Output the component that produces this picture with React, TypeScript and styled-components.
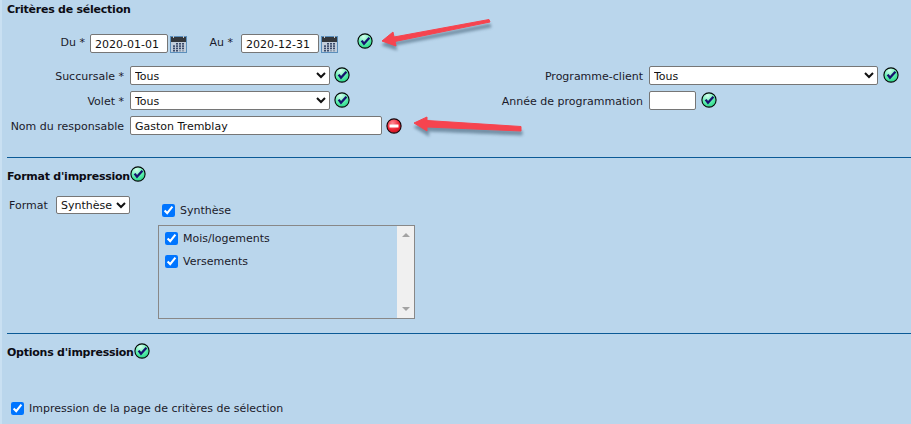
import React from "react";
import styled, { createGlobalStyle } from "styled-components";

const Global = createGlobalStyle`
  html, body { margin: 0; padding: 0; background: #bad6ec; overflow: hidden; }
  body { font-family: "DejaVu Sans", Verdana, sans-serif; font-size: 11px; color: #1a1a2a; }
`;

const Page = styled.div`
  position: relative;
  width: 911px;
  height: 424px;
  box-sizing: border-box;
  background: #bad6ec;
  border-left: 2px solid #c9e0f2;
  overflow: hidden;
`;

const Title = styled.h2`
  display: flex;
  align-items: flex-start;
  margin: 0;
  padding-left: 5px;
  font-size: 11px;
  line-height: 13px;
  font-weight: bold;
  letter-spacing: -0.24px;
  color: #0c0c14;
`;

const Section = styled.section<{ $top: number }>`
  padding-top: ${(p) => p.$top}px;
`;

const DateRow = styled.div`
  display: flex;
  align-items: center;
  height: 19px;
  margin-top: 18px;
`;

const DateLabel = styled.label<{ $w: number; $pr: number }>`
  width: ${(p) => p.$w}px;
  margin-bottom: 2px;
  text-align: right;
  flex: none;
  padding-right: ${(p) => p.$pr}px;
  box-sizing: border-box;
`;

const TextInput = styled.input<{ $w: number }>`
  width: ${(p) => p.$w}px;
  height: 19px;
  box-sizing: border-box;
  flex: none;
  margin: 0;
  padding: 1px 4px 0;
  border: 1px solid #767676;
  border-radius: 2px;
  background: #fff;
  font: 11px "DejaVu Sans", Verdana, sans-serif;
  color: #111;
`;

const Columns = styled.div`
  display: grid;
  grid-template-columns: 480px 429px;
  margin-top: 13px;
`;

const Column = styled.div`
  display: flex;
  flex-direction: column;
  gap: 6px;
`;

const Row = styled.div`
  display: flex;
  align-items: center;
  height: 19px;
`;

const FieldLabel = styled.label<{ $w: number }>`
  width: ${(p) => p.$w}px;
  flex: none;
  box-sizing: border-box;
  padding: 2px 6px 0 0;
  text-align: right;
  white-space: nowrap;
`;

const Select = styled.select<{ $w: number }>`
  width: ${(p) => p.$w}px;
  height: 19px;
  flex: none;
  box-sizing: border-box;
  margin: 0;
  padding-top: 1px;
  border: 1px solid #767676;
  border-radius: 2px;
  background-color: #fff;
  font: 11px "DejaVu Sans", Verdana, sans-serif;
  color: #111;
`;

const Rule = styled.hr<{ $top: number }>`
  margin: ${(p) => p.$top}px 0 0 5px;
  border: 0;
  height: 1px;
  background: #0b5a96;
`;

const FormatGrid = styled.div`
  display: flex;
  align-items: flex-start;
  margin-top: 13px;
`;

const FormatField = styled.div`
  display: flex;
  align-items: center;
  width: 156px;
  flex: none;
  padding-left: 7px;
  box-sizing: border-box;
`;

const FormatLabel = styled.label`
  width: 47px;
  flex: none;
  padding-top: 1px;
`;

const FormatSelect = styled(Select)`
  width: 74px;
  height: 18px;
  padding-top: 0;
`;

const Choices = styled.div`
  display: flex;
  flex-direction: column;
`;

const CheckLine = styled.label<{ $ml?: number; $mt?: number }>`
  display: flex;
  align-items: center;
  gap: 5px;
  height: 14px;
  margin-left: ${(p) => p.$ml ?? 0}px;
  margin-top: ${(p) => p.$mt ?? 0}px;
  white-space: nowrap;
`;

const Box = styled.input.attrs({ type: "checkbox" })`
  width: 13px;
  height: 13px;
  margin: 0;
  flex: none;
`;

const ListBox = styled.div`
  display: flex;
  width: 257px;
  height: 94px;
  margin-top: 8px;
  box-sizing: border-box;
  border: 1px solid #888;
`;

const ListItems = styled.div`
  flex: 1;
  display: flex;
  flex-direction: column;
  gap: 9px;
  padding: 5px 0 0 6px;
`;

const ScrollTrack = styled.div`
  width: 17px;
  flex: none;
  display: flex;
  flex-direction: column;
  justify-content: space-between;
  align-items: center;
  padding: 7px 0;
  box-sizing: border-box;
  background: #f0f0f0;
`;

const Triangle = styled.span<{ $up?: boolean }>`
  width: 0;
  height: 0;
  border-left: 4px solid transparent;
  border-right: 4px solid transparent;
  ${(p) => (p.$up ? "border-bottom: 4px solid #a3a3a3;" : "border-top: 4px solid #a3a3a3;")}
`;

const FooterLine = styled(CheckLine)`
  margin-left: 9px;
  margin-top: 42px;
`;

const IconSlot = styled.svg<{ $ml: number; $mt?: number }>`
  flex: none;
  margin-left: ${(p) => p.$ml}px;
  margin-top: ${(p) => p.$mt ?? 0}px;
`;

const Overlay = styled.svg`
  position: absolute;
  left: -2px;
  top: 0;
  pointer-events: none;
`;

let uid = 0;
const Ok = ({ ml, mt = 0 }: { ml: number; mt?: number }) => {
  const id = `ok${uid++}`;
  return (
    <IconSlot $ml={ml} $mt={mt} width="16" height="16" viewBox="0 0 16 16">
      <defs>
        <radialGradient id={id} cx="0.4" cy="0.2" r="0.9">
          <stop offset="0" stopColor="#d6fdee" />
          <stop offset="0.5" stopColor="#66f0b4" />
          <stop offset="1" stopColor="#18d07a" />
        </radialGradient>
      </defs>
      <circle cx="8" cy="8" r="7.1" fill={`url(#${id})`} stroke="#020805" strokeWidth="1.1" />
      <path d="M4.6 7.6 L7 10.8 L12.4 4.8" fill="none" stroke="#16106e" strokeWidth="2.3" strokeLinejoin="miter" />
    </IconSlot>
  );
};

const Stop = ({ ml }: { ml: number }) => (
  <IconSlot $ml={ml} width="16" height="16" viewBox="0 0 16 16">
    <defs>
      <radialGradient id="stopg" cx="0.4" cy="0.3" r="0.8">
        <stop offset="0" stopColor="#ff8a94" />
        <stop offset="0.6" stopColor="#ee2030" />
        <stop offset="1" stopColor="#b50f1c" />
      </radialGradient>
    </defs>
    <circle cx="8" cy="8" r="7.1" fill="url(#stopg)" stroke="#14060a" strokeWidth="1.1" />
    <rect x="3.5" y="6.5" width="9" height="3" fill="#fff" />
  </IconSlot>
);

const Calendar = ({ ml }: { ml: number }) => (
  <IconSlot $ml={ml} width="17" height="18" viewBox="0 0 17 18">
    <rect x="0.5" y="1.5" width="16" height="16" fill="#c2cedb" stroke="#5c8fbc" />
    <rect x="1" y="2" width="15" height="5" fill="#33373c" />
    <rect x="3" y="0" width="1" height="3" fill="#c2ccd4" />
    <rect x="13" y="0" width="1" height="3" fill="#c2ccd4" />
    {[0, 1, 2, 3].map((r) =>
      [0, 1, 2, 3].map((c) =>
        r === 0 && c === 0 ? null : (
          <rect
            key={`${r}-${c}`}
            x={3 + c * 3}
            y={8 + r * 2.3}
            width="2"
            height="1.6"
            fill={r === 3 && c > 1 ? "#8a9bb0" : "#3a4a6a"}
          />
        )
      )
    )}
  </IconSlot>
);

const Arrows = () => (
  <Overlay width="911" height="424" viewBox="0 0 911 424">
    <defs>
      <filter id="shadow" x="-20%" y="-60%" width="140%" height="260%">
        <feGaussianBlur stdDeviation="1.6" />
      </filter>
    </defs>
    <g fill="#4e6a80" stroke="#4e6a80" opacity="0.65" filter="url(#shadow)" transform="translate(1 4)">
      <path d="M381 41 L394 32 L393 38 L489 20 L490 23 L394 41 L396 46 Z" strokeWidth="1" />
      <path d="M413 123 L428 117 L427 121 L521 127 L521 131 L427 127 L428 132 Z" strokeWidth="1" />
    </g>
    <g fill="#f6444f" stroke="#f6444f" strokeLinejoin="round">
      <path d="M382 41 L393 32 L394 37 L489 19.5 L490 22 L395 41.5 L396 46 Z" strokeWidth="1" />
      <path d="M414 123 L427 117 L427 120.5 L521 126.5 L521 131 L427 127 L427 131 Z" strokeWidth="1" />
    </g>
  </Overlay>
);

export default function App() {
  return (
    <Page>
      <Global />
      <Section $top={3}>
        <Title>Critères de sélection</Title>
        <DateRow>
          <DateLabel $w={88} $pr={5}>Du *</DateLabel>
          <TextInput $w={78} defaultValue="2020-01-01" />
          <Calendar ml={2} />
          <DateLabel $w={54} $pr={8}>Au *</DateLabel>
          <TextInput $w={78} defaultValue="2020-12-31" />
          <Calendar ml={2} />
          <Ok ml={19} mt={-6} />
        </DateRow>
        <Columns>
          <Column>
            <Row>
              <FieldLabel $w={128}>Succursale *</FieldLabel>
              <Select $w={200}><option>Tous</option></Select>
              <Ok ml={4} mt={-2} />
            </Row>
            <Row>
              <FieldLabel $w={128}>Volet *</FieldLabel>
              <Select $w={200}><option>Tous</option></Select>
              <Ok ml={4} mt={-2} />
            </Row>
            <Row>
              <FieldLabel $w={128}>Nom du responsable</FieldLabel>
              <TextInput $w={252} defaultValue="Gaston Tremblay" />
              <Stop ml={4} />
            </Row>
          </Column>
          <Column>
            <Row>
              <FieldLabel $w={167}>Programme-client</FieldLabel>
              <Select $w={229}><option>Tous</option></Select>
              <Ok ml={5} mt={-2} />
            </Row>
            <Row>
              <FieldLabel $w={167}>Année de programmation</FieldLabel>
              <TextInput $w={47} />
              <Ok ml={5} mt={-2} />
            </Row>
          </Column>
        </Columns>
      </Section>
      <Rule $top={22} />
      <Section $top={12}>
        <Title>
          Format d'impression
          <Ok ml={0} mt={-4} />
        </Title>
      </Section>
      <FormatGrid>
        <FormatField>
          <FormatLabel>Format</FormatLabel>
          <FormatSelect $w={74}><option>Synthèse</option></FormatSelect>
        </FormatField>
        <Choices>
          <CheckLine $ml={4} $mt={7}>
            <Box defaultChecked />
            Synthèse
          </CheckLine>
          <ListBox>
            <ListItems>
              <CheckLine><Box defaultChecked />Mois/logements</CheckLine>
              <CheckLine><Box defaultChecked />Versements</CheckLine>
            </ListItems>
            <ScrollTrack>
              <Triangle $up />
              <Triangle />
            </ScrollTrack>
          </ListBox>
        </Choices>
      </FormatGrid>
      <Rule $top={14} />
      <Section $top={12}>
        <Title>
          Options d'impression
          <Ok ml={0} mt={-3} />
        </Title>
      </Section>
      <FooterLine>
        <Box defaultChecked />
        Impression de la page de critères de sélection
      </FooterLine>
      <Arrows />
    </Page>
  );
}
